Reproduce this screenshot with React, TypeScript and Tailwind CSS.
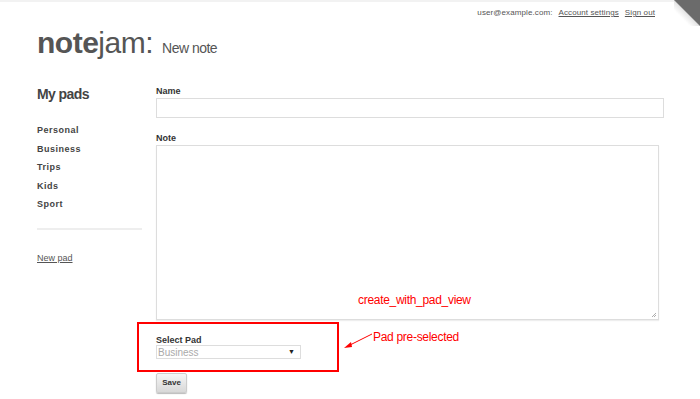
import React from 'react';

const pads = ['Personal', 'Business', 'Trips', 'Kids', 'Sport'];

export default function App() {
  return (
    <div
      className="relative h-[399px] w-[700px] overflow-hidden bg-white text-[#333]"
      style={{ fontFamily: '"Liberation Sans", Arial, sans-serif' }}
    >
      {/* top strip */}
      <div className="h-[2px] bg-[#f2f2f2]" />

      {/* page curl */}
      <div className="absolute right-0 top-0 h-[26px] w-[26px] bg-[linear-gradient(225deg,#6b6b6b_0%,#6b6b6b_48%,#e6e6e6_52%,#ffffff_70%)]" />

      {/* user bar */}
      <div className="flex justify-end gap-[6px] pr-[45px] pt-[5px] text-[8px] leading-[12px] tracking-[0.1px] text-[#555]">
        <span>user@example.com:</span>
        <a className="underline">Account settings</a>
        <a className="underline">Sign out</a>
      </div>

      {/* heading */}
      <div className="mt-[9px] flex items-baseline pl-[37px]">
        <span className="text-[30px] leading-none tracking-[-0.5px] text-[#555]">
          <b>note</b>jam:
        </span>
        <span className="ml-[9px] text-[14px] leading-none tracking-[-0.5px] text-[#555]">New note</span>
      </div>

      <div className="mt-[27px] flex pl-[37px]">
        {/* sidebar */}
        <div className="w-[105px] shrink-0">
          <h2 className="pt-[2px] text-[14px] font-bold leading-none tracking-[-0.6px] text-[#444]">My pads</h2>
          <ul className="mt-[23px] flex flex-col gap-[6.5px]">
            {pads.map((p) => (
              <li key={p} className="text-[9px] font-bold leading-[12px] tracking-[0.5px] text-[#444]">
                {p}
              </li>
            ))}
          </ul>
          <hr className="mt-[18px] border-t-2 border-[#eee]" />
          <a className="mt-[22px] block text-[9px] text-[#555] underline">New pad</a>
        </div>

        {/* form */}
        <div className="ml-[14px] w-[508px]">
          <label className="block text-[9px] font-bold leading-[12px] text-[#333]">Name</label>
          <div className="mt-[1px] h-[20px] w-[508px] border border-[#ddd]" />
          <label className="mt-[14px] block text-[9px] font-bold leading-[12px] text-[#333]">Note</label>
          <div className="relative mt-[1px] h-[175px] w-[503px] border border-[#ddd] shadow-[0_1px_1px_#eee]">
            <span className="absolute left-[201px] top-[145px] text-[12px] tracking-[-0.3px] text-[#f00]">
              create_with_pad_view
            </span>
            <svg className="absolute bottom-[1px] right-[1px]" width="6" height="6" viewBox="0 0 6 6">
              <path d="M5 1 L1 5 M5 3 L3 5" stroke="#999" strokeWidth="0.8" />
            </svg>
          </div>

          {/* select pad */}
          <div className="relative -ml-[19px] mt-[2px] h-[50px] w-[202px] border-2 border-[#f00] pl-[17px] pt-[10px]">
            <label className="block text-[9px] font-bold leading-[12px] text-[#333]">Select Pad</label>
            <div className="-mt-[1px] flex h-[14px] w-[145px] items-center justify-between border border-[#ddd] pl-[1px] pr-[5px] text-[10px] text-[#aaa]">
              <span>Business</span>
              <span className="text-[7px] text-[#222]">▼</span>
            </div>
            <svg className="absolute left-[203px] top-[8px]" width="32" height="20" viewBox="0 0 32 20">
              <path d="M30 2 L6 14" stroke="#f00" strokeWidth="1" />
              <path d="M2 16 L9 10 L10 15 Z" fill="#f00" />
            </svg>
            <span className="absolute left-[234px] top-[4px] whitespace-nowrap text-[12px] tracking-[-0.3px] text-[#f00]">
              Pad pre-selected
            </span>
          </div>

          <button className="mt-[1px] block h-[20px] w-[31px] rounded-[2px] border border-[#ccc] bg-[linear-gradient(#f5f5f5,#d8d8d8)] text-[8px] font-bold text-[#333] shadow-[0_1px_1px_#bbb]">
            Save
          </button>
        </div>
      </div>
    </div>
  );
}
